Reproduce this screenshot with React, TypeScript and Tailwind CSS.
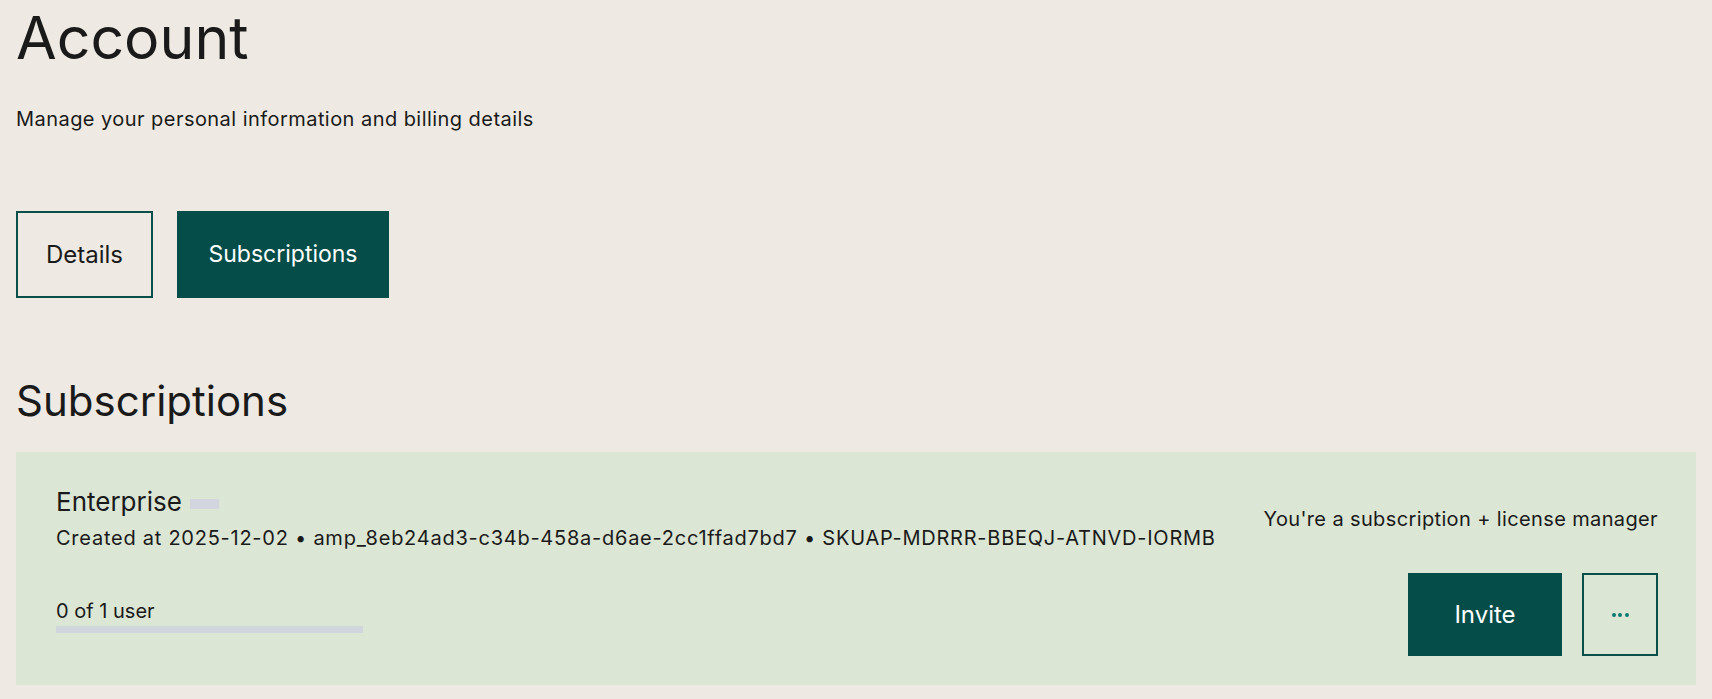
const App = () => {
  return (
    <div className="min-h-screen bg-[#eeeae3] px-4 pb-4 font-['Inter',sans-serif] text-[#1a1a1a]">
      <h1 className="pt-2 text-[59px] leading-[60px] font-normal">Account</h1>
      <p className="mt-[37px] text-[20px] leading-[28px] tracking-[0.45px]">
        Manage your personal information and billing details
      </p>

      <div className="mt-[78px] flex gap-6">
        <button className="h-[87px] w-[137px] border-2 border-[#0a4f4a] text-[24px] text-[#1a1a1a]">
          Details
        </button>
        <button className="h-[87px] w-[212px] bg-[#054d49] text-[23px] text-white">
          Subscriptions
        </button>
      </div>

      <h2 className="mt-[82px] text-[42px] leading-[42px] font-normal">
        Subscriptions
      </h2>

      <div className="mt-[30px] bg-[#dce6d5] pt-[34px] pb-[29px] pl-10 pr-[38px]">
        <div className="flex items-center justify-between">
          <div>
            <div className="flex items-center gap-2">
              <span className="text-[26px] leading-[32px]">Enterprise</span>
              <span className="mt-[4px] h-[10px] w-[29px] bg-[#d2d5dd]" />
            </div>
            <p className="mt-[6px] text-[20px] leading-[28px] tracking-[0.75px]">
              Created at 2025-12-02 • amp_8eb24ad3-c34b-458a-d6ae-2cc1ffad7bd7 •
              SKUAP-MDRRR-BBEQJ-ATNVD-IORMB
            </p>
          </div>
          <p className="text-[20px] leading-[28px] tracking-[0.37px]">
            You're a subscription + license manager
          </p>
        </div>

        <div className="mt-[21px] flex items-center justify-between">
          <div>
            <p className="text-[20px] leading-[28px]">0 of 1 user</p>
            <div className="mt-px h-[7px] w-[307px] bg-[#d1d5dc]" />
          </div>
          <div className="flex gap-5">
            <button className="h-[83px] w-[154px] bg-[#054d49] text-[24px] text-white">
              Invite
            </button>
            <button className="flex h-[83px] w-[76px] items-center justify-center gap-[2.5px] border-2 border-[#0a4f4a]">
              <span className="h-1 w-1 rounded-full bg-[#0f7a72]" />
              <span className="h-1 w-1 rounded-full bg-[#0f7a72]" />
              <span className="h-1 w-1 rounded-full bg-[#0f7a72]" />
            </button>
          </div>
        </div>
      </div>
    </div>
  );
};

export default App;
